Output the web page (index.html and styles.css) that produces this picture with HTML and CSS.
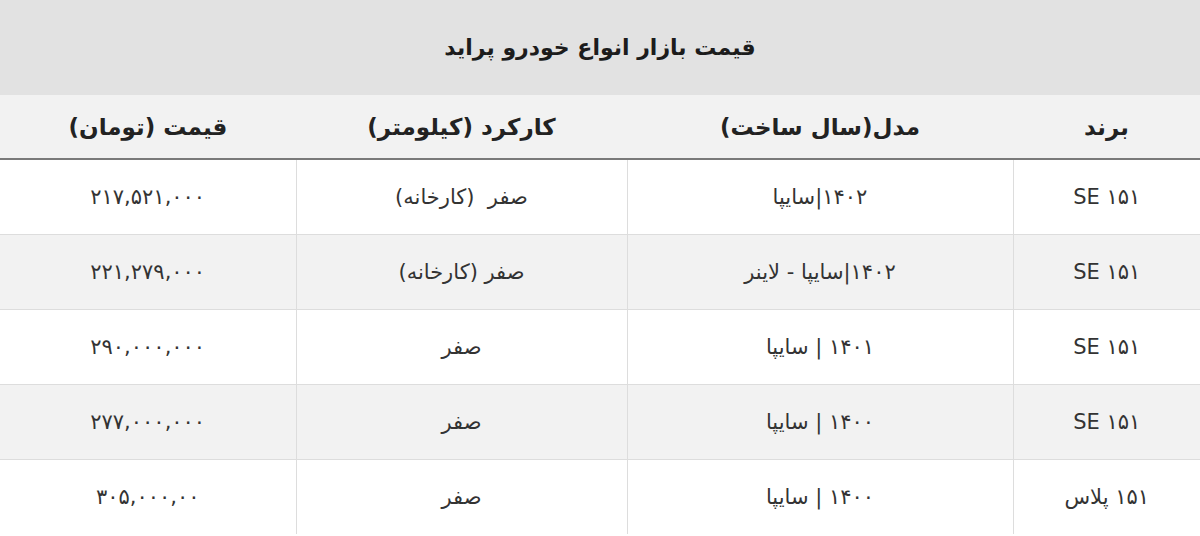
FILE: index.html
```html
<!DOCTYPE html>
<html lang="fa" dir="rtl">
<head>
<meta charset="utf-8">
<link rel="stylesheet" href="styles.css">
</head>
<body>
<table class="price-table">
  <colgroup>
    <col class="c-brand">
    <col class="c-model">
    <col class="c-km">
    <col class="c-price">
  </colgroup>
  <thead>
    <tr class="title-row"><th colspan="4">قیمت بازار انواع خودرو پراید</th></tr>
    <tr class="head-row">
      <th>برند</th>
      <th>مدل(سال ساخت)</th>
      <th>کارکرد (کیلومتر)</th>
      <th>قیمت (تومان)</th>
    </tr>
  </thead>
  <tbody>
    <tr><td>SE ۱۵۱</td><td>۱۴۰۲|سایپا</td><td>صفر&nbsp; (کارخانه)</td><td>۲۱۷,۵۲۱,۰۰۰</td></tr>
    <tr><td>SE ۱۵۱</td><td>۱۴۰۲|سایپا - لاینر</td><td>صفر (کارخانه)</td><td>۲۲۱,۲۷۹,۰۰۰</td></tr>
    <tr><td>SE ۱۵۱</td><td>۱۴۰۱ | سایپا</td><td>صفر</td><td>۲۹۰,۰۰۰,۰۰۰</td></tr>
    <tr><td>SE ۱۵۱</td><td>۱۴۰۰ | سایپا</td><td>صفر</td><td>۲۷۷,۰۰۰,۰۰۰</td></tr>
    <tr><td>۱۵۱ پلاس</td><td>۱۴۰۰ | سایپا</td><td>صفر</td><td>۳۰۵,۰۰۰,۰۰</td></tr>
  </tbody>
</table>
</body>
</html>
```

FILE: styles.css
```css
html, body {
  margin: 0;
  padding: 0;
  background: #ffffff;
}
body {
  font-family: "DejaVu Sans", "Noto Sans", sans-serif;
  color: #2a2a2a;
}
.price-table {
  width: 1200px;
  border-collapse: collapse;
  table-layout: fixed;
}
.c-brand { width: 187px; }
.c-model { width: 386px; }
.c-km { width: 331px; }
.c-price { width: 296px; }

.title-row th {
  height: 95px;
  padding: 0;
  background: #e2e2e2;
  font-size: 22px;
  font-weight: bold;
  color: #1c1c1c;
  text-align: center;
}
.head-row th {
  height: 63px;
  padding: 0;
  background: #f2f2f2;
  font-size: 23px;
  font-weight: bold;
  color: #222;
  text-align: center;
  border-bottom: 2px solid #7a7a7a;
}
tbody td {
  height: 74px;
  padding: 0;
  text-align: center;
  font-size: 21px;
  color: #333;
  border-top: 1px solid #dddddd;
  border-left: 1px solid #dddddd;
}
tbody tr:first-child td {
  border-top: none;
}
tbody td:last-child {
  border-left: none;
}
tbody tr:nth-child(even) td {
  background: #f2f2f2;
}
```
